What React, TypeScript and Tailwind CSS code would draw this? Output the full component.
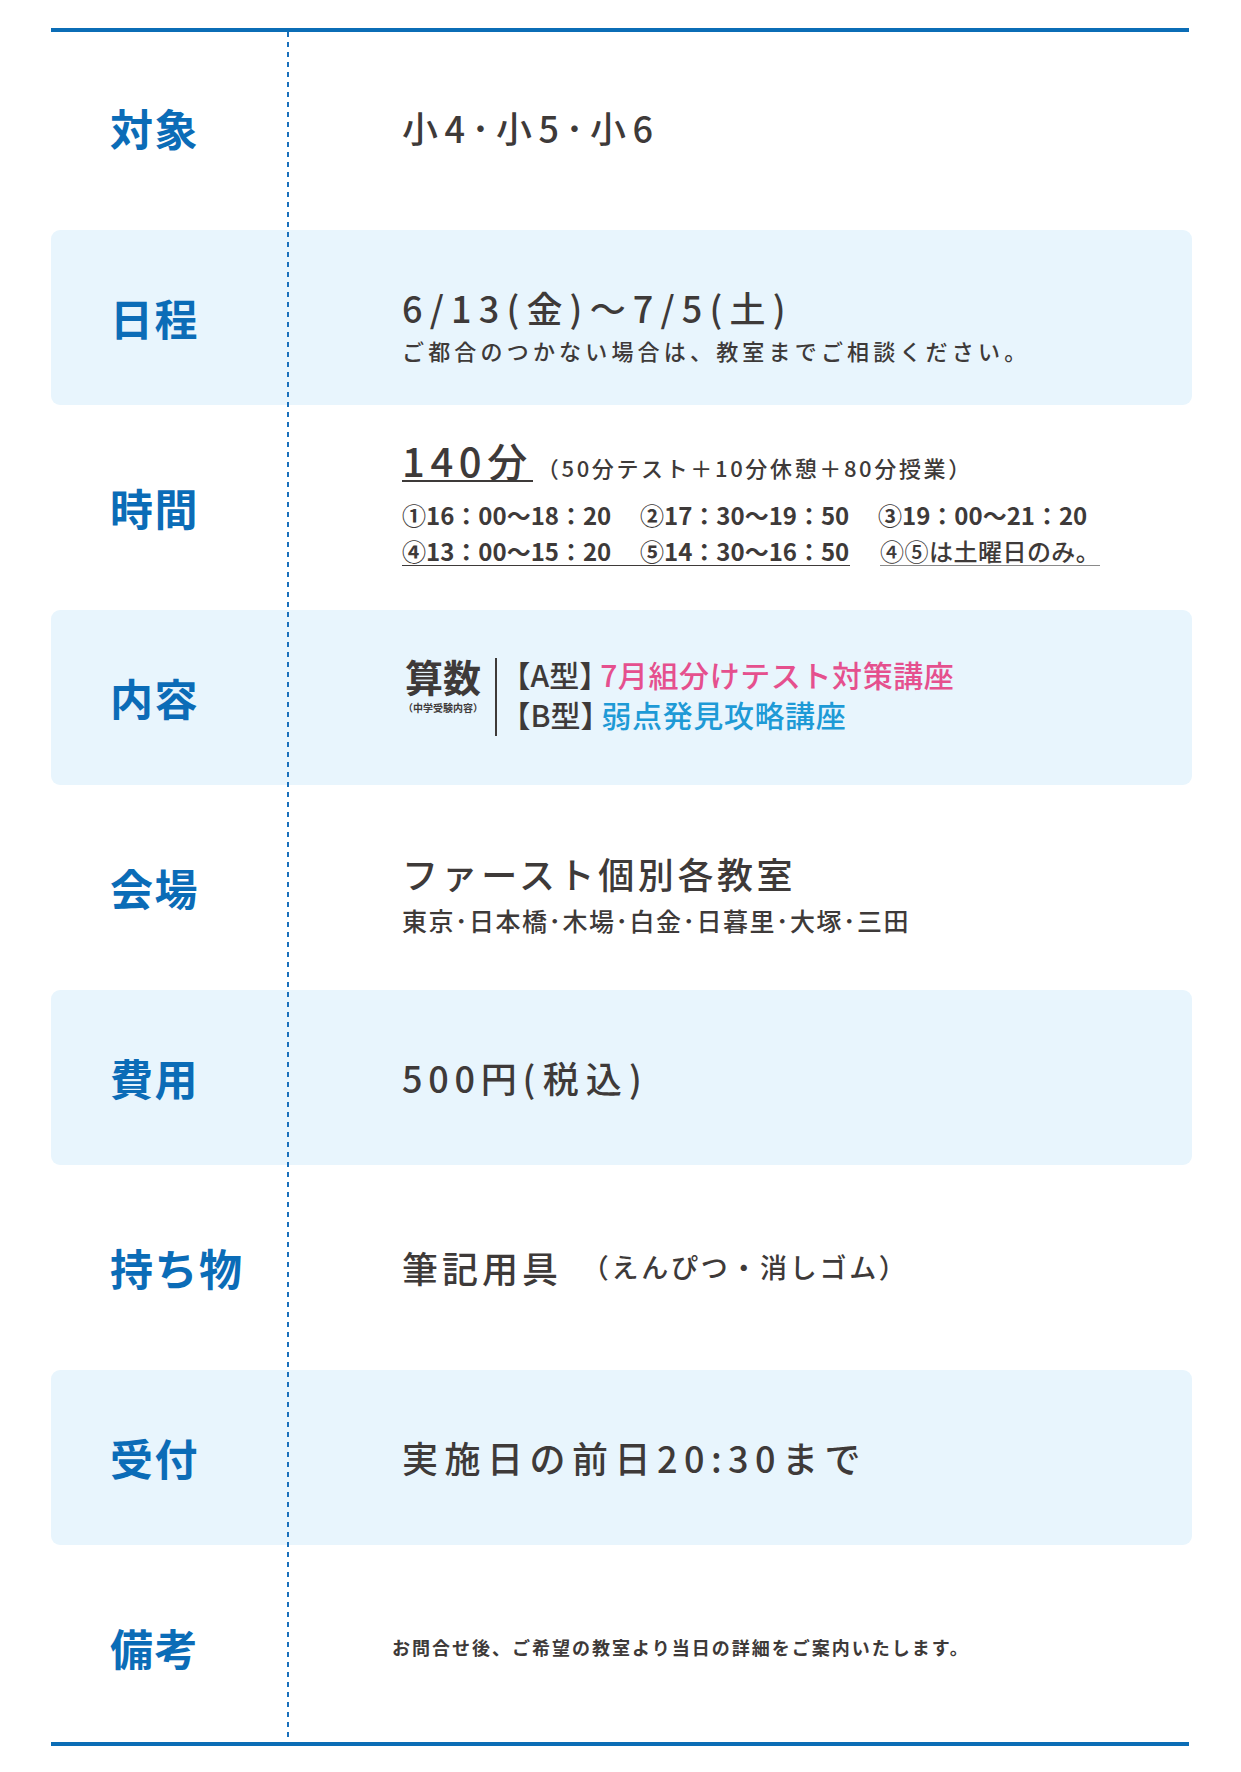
import React from "react";

const Row = ({
  shaded,
  label,
  children,
}: {
  shaded?: boolean;
  label: React.ReactNode;
  children: React.ReactNode;
}) => (
  <div className="h-[190px] flex items-center">
    <div
      className={
        shaded
          ? "h-[175px] w-full flex items-center bg-[#e8f5fd] rounded-[9px]"
          : "h-[175px] w-full flex items-center"
      }
    >
      <div className="w-[236px] shrink-0 pl-[59px] text-[43px] leading-[48px] font-bold tracking-[1.5px] text-[#0b6cb7]">
        {label}
      </div>
      <div className="pl-[115px] text-[#3e3a39]">{children}</div>
    </div>
  </div>
);

export default function App() {
  return (
    <div className="bg-white min-h-[1772px] pt-[28px] font-['Noto_Sans_CJK_JP',sans-serif]">
      <div className="relative ml-[51px] w-[1141px]">
        <div className="h-[4px] w-[1138px] bg-[#0b6db6]" />

        <Row label="対象">
          <div className="text-[36px] leading-[40px] font-medium tracking-[0.18em]">
            小4･小5･小6
          </div>
        </Row>

        <Row shaded label="日程">
          <div className="pt-[16px]">
            <div className="text-[36px] leading-[40px] font-medium tracking-[0.2em]">
              6/13(金)～7/5(土)
            </div>
            <div className="mt-[9px] text-[22px] leading-[28px] font-medium tracking-[0.19em]">
              ご都合のつかない場合は、教室までご相談ください。
            </div>
          </div>
        </Row>

        <Row label="時間">
          <div className="pb-[8px]">
            <div className="flex items-baseline whitespace-nowrap">
              <span className="text-[40px] leading-[40px] font-medium tracking-[0.14em] border-b-2 border-[#3e3a39]">
                140分
              </span>
              <span className="ml-[4px] text-[22px] leading-[28px] font-medium tracking-[0.12em]">
                （50分テスト＋10分休憩＋80分授業）
              </span>
            </div>
            <div className="mt-[18px] flex whitespace-nowrap text-[24px] leading-[30px] font-bold">
              <span className="w-[238px]">①16：00～18：20</span>
              <span className="w-[238px]">②17：30～19：50</span>
              <span>③19：00～21：20</span>
            </div>
            <div className="mt-[7px] flex items-end whitespace-nowrap text-[24px] leading-[28px]">
              <div className="w-[448px] flex font-bold border-b-[1.5px] border-[#3e3a39]">
                <span className="w-[238px]">④13：00～15：20</span>
                <span>⑤14：30～16：50</span>
              </div>
              <span className="ml-[30px] text-[24px] font-medium tracking-[0.02em] border-b-[1.5px] border-[#8a8a8a]">
                ④⑤は土曜日のみ。
              </span>
            </div>
          </div>
        </Row>

        <Row shaded label="内容">
          <div className="flex items-center">
            <div className="w-[82px] flex flex-col items-center pb-[24px]">
              <div className="text-[38px] leading-[40px] font-bold">算数</div>
              <div className="mt-[6px] text-[10px] leading-[12px] font-bold whitespace-nowrap">
                （中学受験内容）
              </div>
            </div>
            <div className="ml-[11px] w-[1.5px] h-[78px] bg-[#3e3a39]" />
            <div className="ml-[4px] pb-[6px] text-[30px] leading-[40px] font-medium whitespace-nowrap">
              <div>
                【A型】<span className="ml-[-9px] tracking-[0.6px] text-[#e5508e]">7月組分けテスト対策講座</span>
              </div>
              <div>
                【B型】<span className="ml-[-9px] tracking-[0.6px] text-[#1e9ad6]">弱点発見攻略講座</span>
              </div>
            </div>
          </div>
        </Row>

        <Row label="会場">
          <div className="pt-[13px]">
            <div className="text-[36px] leading-[40px] font-medium tracking-[0.1em]">
              ファースト個別各教室
            </div>
            <div className="mt-[12px] text-[25px] leading-[30px] font-medium tracking-[1.5px]">
              東京･日本橋･木場･白金･日暮里･大塚･三田
            </div>
          </div>
        </Row>

        <Row shaded label="費用">
          <div className="text-[36px] leading-[40px] font-medium tracking-[0.16em]">
            500円<span className="tracking-[0.2em]">(税込)</span>
          </div>
        </Row>

        <Row label="持ち物">
          <div className="flex items-center">
            <span className="text-[36px] leading-[40px] font-medium tracking-[0.11em]">
              筆記用具
            </span>
            <span className="ml-[20px] text-[27px] leading-[40px] font-medium tracking-[0.1em]">
              （えんぴつ・消しゴム）
            </span>
          </div>
        </Row>

        <Row shaded label="受付">
          <div className="text-[36px] leading-[40px] font-medium tracking-[0.18em]">
            実施日の前日20:30まで
          </div>
        </Row>

        <Row label="備考">
          <div className="ml-[-10px] text-[18px] leading-[24px] font-bold tracking-[2px]">
            お問合せ後、ご希望の教室より当日の詳細をご案内いたします。
          </div>
        </Row>

        <div className="h-[4px] w-[1138px] bg-[#0b6db6]" />

        <div className="pointer-events-none absolute left-[236px] top-[4px] bottom-[4px] w-[2px] bg-[repeating-linear-gradient(to_bottom,#1a70bb_0px,#1a70bb_5px,transparent_5px,transparent_10px)]" />
      </div>
    </div>
  );
}
